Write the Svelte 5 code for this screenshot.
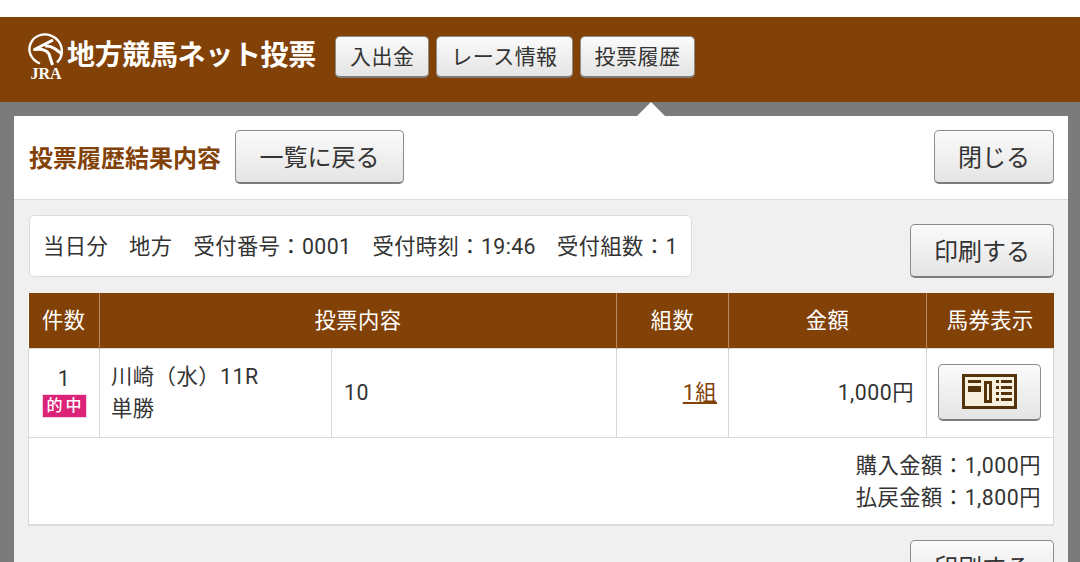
<script>
	const topLinks = ['入出金', 'レース情報', '投票履歴'];
	const columns = ['件数', '投票内容', '組数', '金額', '馬券表示'];
</script>

<div class="page">
	<header class="topbar">
		<div class="brand">
			<div class="logo">
				<svg width="35" height="35" viewBox="0 0 35 35" fill="none" stroke="#fff" stroke-width="2.4">
					<path d="M29 29.5 C34 25 35.5 17 32 10.5 C28 3 19 -0.5 11 2.5 C3 5.5 -0.5 14.5 2.5 21.5 C4.5 26 8 29 12 30.5" />
					<path d="M25 7 L6.5 16.5 C13 15.5 18.5 17 21 21 L24.5 32" stroke-width="3" stroke-linejoin="round" />
					<path d="M34 21 L26.5 15.5 C23.5 13.5 20.5 12.5 17 13" stroke-width="3" />
				</svg>
				<span class="jra">JRA</span>
			</div>
			<span class="brand-name">地方競馬ネット投票</span>
		</div>
		<nav class="top-links">
			{#each topLinks as link}
				<button class="btn small">{link}</button>
			{/each}
		</nav>
	</header>

	<main class="panel">
		<div class="arrow"></div>
		<div class="panel-head">
			<h1>投票履歴結果内容</h1>
			<button class="btn large back">一覧に戻る</button>
			<button class="btn large close">閉じる</button>
		</div>

		<div class="panel-body">
			<div class="info-row">
				<div class="info">
					<span>当日分</span>
					<span>地方</span>
					<span>受付番号：0001</span>
					<span>受付時刻：19:46</span>
					<span>受付組数：1</span>
				</div>
				<button class="btn large print">印刷する</button>
			</div>

			<table>
				<colgroup>
					<col style="width: 71px" />
					<col style="width: 232px" />
					<col style="width: 285px" />
					<col style="width: 112px" />
					<col style="width: 198px" />
					<col style="width: 127px" />
				</colgroup>
				<thead>
					<tr>
						<th>{columns[0]}</th>
						<th colspan="2">{columns[1]}</th>
						<th>{columns[2]}</th>
						<th>{columns[3]}</th>
						<th>{columns[4]}</th>
					</tr>
				</thead>
				<tbody>
					<tr class="data">
						<td class="no">
							<div>1</div>
							<span class="hit">的中</span>
						</td>
						<td class="race">川崎（水）11R<br />単勝</td>
						<td>10</td>
						<td class="right sets"><a href="#sets">1組</a></td>
						<td class="right">1,000円</td>
						<td class="ticket">
							<button class="btn ticket-btn" aria-label="馬券表示">
								<svg width="55" height="35" viewBox="0 0 55 35">
									<rect x="1.5" y="1.5" width="52" height="32" fill="#f8f0df" stroke="#53320c" stroke-width="3" />
									<g fill="#53320c">
										<rect x="6" y="6" width="13" height="3" />
										<rect x="6" y="12" width="13" height="6" />
										<rect x="22" y="7" width="8" height="22" />
										<rect x="34" y="6" width="3" height="3" />
										<rect x="39" y="6" width="11" height="3" />
										<rect x="34" y="12" width="3" height="3" />
										<rect x="39" y="12" width="11" height="3" />
										<rect x="34" y="18" width="3" height="3" />
										<rect x="39" y="18" width="11" height="3" />
										<rect x="34" y="24" width="3" height="3" />
										<rect x="39" y="24" width="11" height="3" />
									</g>
									<rect x="25" y="10" width="2" height="16" fill="#f8f0df" />
								</svg>
							</button>
						</td>
					</tr>
					<tr class="summary">
						<td colspan="6">購入金額：1,000円<br />払戻金額：1,800円</td>
					</tr>
				</tbody>
			</table>

			<div class="bottom-row">
				<button class="btn large print">印刷する</button>
			</div>
		</div>
	</main>
</div>

<style>
	:global(body) {
		margin: 0;
		overflow: hidden;
	}
	.page {
		height: 562px;
		overflow: hidden;
		padding-top: 17px;
		box-sizing: border-box;
		background: linear-gradient(#fff 17px, #7a7b7a 17px);
		font-family: Roboto, 'Noto Sans CJK JP', sans-serif;
		color: #333;
	}
	.topbar {
		height: 85px;
		background: #824106;
		display: flex;
		align-items: center;
		padding: 0 0 6px 28px;
		box-sizing: border-box;
	}
	.brand {
		display: flex;
		align-items: center;
		width: 307px;
	}
	.logo {
		width: 35px;
		display: flex;
		flex-direction: column;
		align-items: center;
	}
	.logo svg {
		display: block;
		margin-bottom: -1px;
	}
	.jra {
		color: #fff;
		font: bold 16px/13px 'Liberation Serif', serif;
		margin-left: 1px;
	}
	.brand-name {
		color: #fff;
		font-weight: 700;
		font-size: 28px;
		line-height: 34px;
		letter-spacing: -0.35px;
		margin-left: 4px;
		margin-bottom: 2px;
		white-space: nowrap;
	}
	.top-links {
		display: flex;
		gap: 7px;
	}
	.btn {
		font-family: inherit;
		color: #333;
		border: 1px solid #8c8c8c;
		border-bottom: 2px solid #7d7d7d;
		background: linear-gradient(#fbfbfb, #e4e4e4);
		box-sizing: border-box;
		padding: 0 0 2px;
		border-radius: 5px;
		white-space: nowrap;
	}
	.small {
		height: 42px;
		font-size: 21px;
		letter-spacing: 0.45px;
		padding: 0 14px 2px;
	}
	.large {
		height: 54px;
		font-size: 24px;
	}
	.panel {
		position: relative;
		margin: 14px 12px 0 14px;
		background: #f0f0f0;
		height: 460px;
	}
	.arrow {
		position: absolute;
		left: 623px;
		top: -14px;
		width: 0;
		height: 0;
		border-left: 14px solid transparent;
		border-right: 14px solid transparent;
		border-bottom: 14px solid #fff;
	}
	.panel-head {
		height: 84px;
		box-sizing: border-box;
		background: #fff;
		border-bottom: 1px solid #ddd;
		display: flex;
		align-items: center;
		padding: 0 14px 2px 15px;
	}
	h1 {
		margin: 0;
		width: 206px;
		font-size: 24px;
		font-weight: 700;
		color: #824106;
		white-space: nowrap;
	}
	.back {
		width: 169px;
	}
	.close {
		width: 120px;
		margin-left: auto;
	}
	.panel-body {
		padding: 15px 14px 0 15px;
	}
	.info-row {
		display: flex;
		justify-content: space-between;
		align-items: flex-end;
		height: 63px;
	}
	.info {
		width: 663px;
		height: 62px;
		align-self: flex-start;
		box-sizing: border-box;
		background: #fff;
		border: 1px solid #ddd;
		border-radius: 5px;
		display: flex;
		align-items: center;
		gap: 21px;
		padding: 0 0 3px 13px;
		font-size: 21.3px;
		letter-spacing: 0.4px;
		white-space: nowrap;
	}
	.print {
		width: 144px;
	}
	table {
		margin: 15px 0 0 -1px;
		width: 1025px;
		border-collapse: collapse;
		table-layout: fixed;
		background: #fff;
		font-size: 21.3px;
		letter-spacing: 0.5px;
		border-bottom: 2px solid #ddd;
	}
	th {
		box-sizing: border-box;
		height: 55px;
		padding: 0 0 3px;
		background: #824106;
		color: #fff;
		font-weight: 400;
		border-left: 1px solid #b98a5c;
	}
	th:first-child {
		border-left: 0;
	}
	td {
		box-sizing: border-box;
		padding: 1px 12px 0;
		border: 1px solid #d8d8d8;
		line-height: 32px;
	}
	.data td {
		height: 89px;
	}
	td.no {
		padding: 0 0 5px;
		text-align: center;
		line-height: 30px;
	}
	.hit {
		display: block;
		width: 43px;
		height: 22px;
		margin: 1px auto 0;
		background: #dc2378;
		color: #fff;
		font-size: 16px;
		line-height: 21px;
		font-weight: 500;
		letter-spacing: 3px;
		text-indent: 3px;
		box-shadow: 0 0 0 1px #f7d3e4;
	}
	td.race {
		padding-left: 11px;
	}
	.right {
		text-align: right;
	}
	td.sets {
		padding-right: 11px;
	}
	a {
		color: #824106;
	}
	td.ticket {
		padding: 0 0 1px;
		text-align: center;
	}
	.ticket-btn {
		width: 103px;
		height: 57px;
		padding: 0 0 1px;
		display: inline-flex;
		align-items: center;
		justify-content: center;
		vertical-align: middle;
		margin-right: 1px;
	}
	.ticket-btn svg {
		display: block;
	}
	.summary td {
		height: 88px;
		padding-top: 2px;
		text-align: right;
	}
	.bottom-row {
		display: flex;
		justify-content: flex-end;
		margin-top: 14px;
	}
</style>
